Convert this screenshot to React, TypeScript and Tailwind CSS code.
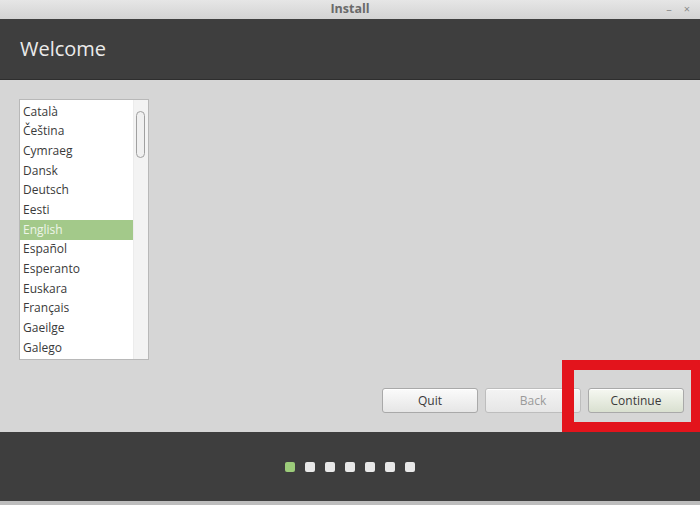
const languages = [
  "Català",
  "Čeština",
  "Cymraeg",
  "Dansk",
  "Deutsch",
  "Eesti",
  "English",
  "Español",
  "Esperanto",
  "Euskara",
  "Français",
  "Gaeilge",
  "Galego",
];

function Button({ label, variant }: { label: string; variant?: "disabled" | "primary" }) {
  const tone =
    variant === "primary"
      ? "bg-gradient-to-b from-[#f6f8f2] to-[#d9e0d0] text-[#3a3a3a]"
      : variant === "disabled"
        ? "bg-gradient-to-b from-[#f4f4f4] to-[#e6e6e6] text-[#9a9a9a] border-[#bdbdbd]"
        : "bg-gradient-to-b from-[#fbfbfb] to-[#e6e6e6] text-[#3a3a3a]";

  return (
    <button
      type="button"
      className={`flex h-[25px] w-[96px] items-center justify-center rounded-[3px] border border-[#a9a9a9] text-[12px] shadow-[inset_0_1px_0_#fff] ${tone}`}
    >
      {label}
    </button>
  );
}

export default function App() {
  return (
    <div
      className="relative flex h-[505px] w-[700px] flex-col overflow-hidden bg-[#d6d6d6]"
      style={{ fontFamily: '"Open Sans", "Noto Sans", sans-serif' }}
    >
      {/* window title bar */}
      <div className="relative flex h-[19px] shrink-0 items-center justify-center bg-gradient-to-b from-[#e6e6e6] to-[#d3d3d3]">
        <span className="text-[12.5px] font-bold text-[#6a6a6a]">Install</span>
        <div className="absolute right-[10px] top-0 flex h-full items-center gap-[12px] text-[11px] text-[#8a8a8a]">
          <span>–</span>
          <span>×</span>
        </div>
      </div>

      {/* header */}
      <div className="flex h-[61px] shrink-0 items-center border-b border-[#2e2e2e] bg-[#3e3e3e] pl-[20px]">
        <h1 className="text-[20px] text-[#ebebeb]">Welcome</h1>
      </div>

      {/* body */}
      <div className="flex h-[352px] shrink-0 flex-col justify-between pb-[19px] pl-[19px] pr-[16px] pt-[19px]">
        <div className="flex h-[261px] w-[130px] border border-[#b8b8b8] bg-white">
          <ul className="flex-1 pt-[2px]">
            {languages.map((lang) => (
              <li
                key={lang}
                className={`flex h-[19.67px] items-center pl-[3px] text-[12px] ${
                  lang === "English" ? "bg-[#a3c98a] text-[#eef5e8]" : "text-[#3a3a3a]"
                }`}
              >
                {lang}
              </li>
            ))}
          </ul>
          <div className="w-[15px] border-l border-[#ececec] bg-[#f3f3f3] pt-[11px]">
            <div className="ml-[2px] h-[47px] w-[9px] rounded-[5px] border border-[#a0a0a0] bg-[#f0f0f0]" />
          </div>
        </div>

        <div className="flex justify-end gap-[7px]">
          <Button label="Quit" />
          <Button label="Back" variant="disabled" />
          <Button label="Continue" variant="primary" />
        </div>
      </div>

      {/* step indicator */}
      <div className="flex h-[73px] shrink-0 items-center justify-center gap-[10px] border-b-[4px] border-[#bdbdbd] bg-[#3e3e3e]">
        <span className="h-[10px] w-[10px] rounded-[2px] bg-[#9ccc7a]" />
        {[1, 2, 3, 4, 5, 6].map((i) => (
          <span key={i} className="h-[10px] w-[10px] rounded-[2px] bg-[#e8e8e8]" />
        ))}
      </div>

      {/* annotation highlight */}
      <div className="pointer-events-none absolute left-[562px] top-[360px] h-[72px] w-[138px] border-b-[10px] border-l-[12px] border-r-[9px] border-t-[10px] border-[#e3141c]" />
    </div>
  );
}
